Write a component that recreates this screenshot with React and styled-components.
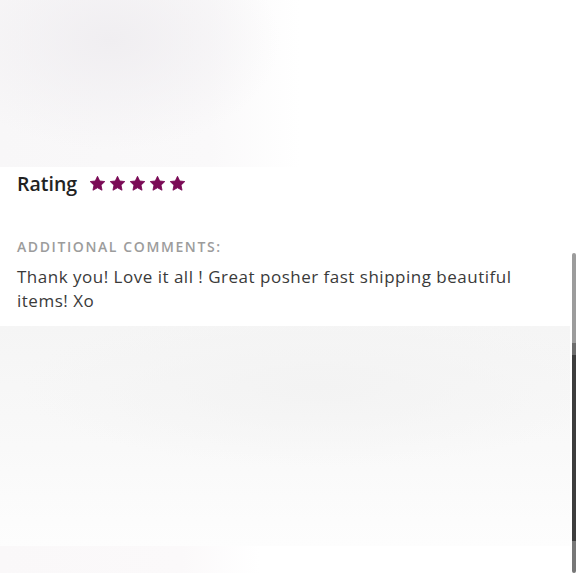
import React from 'react';
import styled, { createGlobalStyle } from 'styled-components';

const GlobalStyle = createGlobalStyle`
  html, body {
    margin: 0;
    padding: 0;
    background: #fff;
  }
  * {
    box-sizing: border-box;
  }
`;

const Page = styled.div`
  position: relative;
  width: 580px;
  height: 580px;
  overflow: hidden;
  background: #fff;
  font-family: "Open Sans", "Liberation Sans", sans-serif;
  display: flex;
  flex-direction: column;
`;

const Hero = styled.div`
  height: 167px;
  width: 300px;
  flex-shrink: 0;
  background:
    radial-gradient(ellipse 170px 110px at 110px 40px, rgba(240, 238, 241, 1), rgba(240, 238, 241, 0) 100%),
    linear-gradient(90deg, #f8f7f8 0%, #faf9fa 70%, rgba(255, 255, 255, 0) 100%);
`;

const Content = styled.section`
  padding: 0 17px;
  flex-shrink: 0;
  height: 159px;
`;

const RatingRow = styled.div`
  display: flex;
  align-items: center;
  gap: 12px;
  margin-top: 2px;
  height: 28px;
`;

const RatingLabel = styled.span`
  font-size: 19.5px;
  font-weight: 600;
  color: #222;
`;

const Stars = styled.div`
  display: flex;
  gap: 3px;
`;

const Label = styled.div`
  margin-top: 40px;
  font-size: 14px;
  font-weight: 600;
  letter-spacing: 1.6px;
  color: #9c9c9c;
`;

const Comment = styled.p`
  margin: 9px 0 0;
  font-size: 17px;
  line-height: 24px;
  letter-spacing: 0.5px;
  color: #3a3a3a;
  width: 540px;
`;

const Lower = styled.div`
  height: 220px;
  flex-shrink: 0;
  margin-right: 10px;
  background:
    radial-gradient(ellipse 300px 80px at 320px 60px, rgba(243, 243, 243, 1), rgba(243, 243, 243, 0) 100%),
    linear-gradient(180deg, #f5f5f5 0%, #f9f9f9 55%, #fdfdfd 100%);
`;

const Strip = styled.div`
  height: 27px;
  width: 260px;
  flex-shrink: 0;
  background: linear-gradient(90deg, #faf8f9 0%, #fbf9fa 70%, rgba(255, 255, 255, 0) 100%);
`;

const ScrollTrack = styled.div`
  position: absolute;
  left: 572px;
  top: 253px;
  width: 4px;
  height: 320px;
  border-radius: 2px;
  background: linear-gradient(180deg, #9c9c9c 0%, #9c9c9c 28%, #6d6d6d 28%, #6d6d6d 32%, #3e3e3e 32%, #3e3e3e 90%, #777 90%, #777 100%);
`;

const Star = ({ size = 17 }) => (
  <svg width={size} height={size} viewBox="0 0 24 24">
    <path
      d="M12 1.8l3.1 6.6 7.2.9-5.3 5 1.4 7.2L12 18l-6.4 3.5 1.4-7.2-5.3-5 7.2-.9z"
      fill="#7a0a55"
      stroke="#7a0a55"
      strokeWidth="1.2"
      strokeLinejoin="round"
    />
  </svg>
);

export default function App() {
  return (
    <Page>
      <GlobalStyle />
      <Hero />
      <Content>
        <RatingRow>
          <RatingLabel>Rating</RatingLabel>
          <Stars>
            {[0, 1, 2, 3, 4].map(i => <Star key={i} />)}
          </Stars>
        </RatingRow>
        <Label>ADDITIONAL COMMENTS:</Label>
        <Comment>Thank you! Love it all ! Great posher fast shipping beautiful items! Xo</Comment>
      </Content>
      <Lower />
      <Strip />
      <ScrollTrack />
    </Page>
  );
}
